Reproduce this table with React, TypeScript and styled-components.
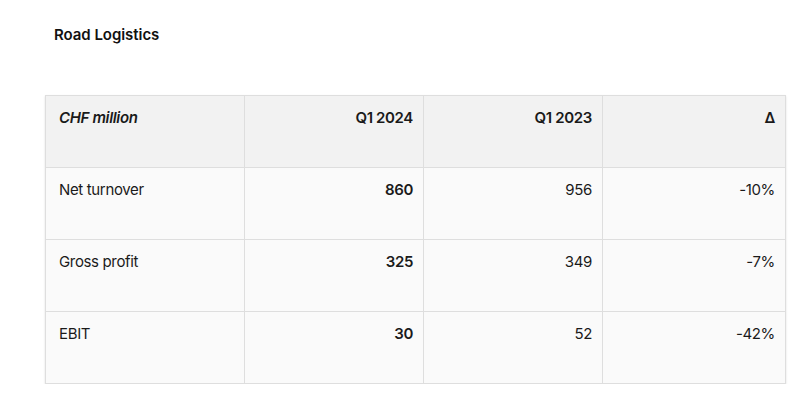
import React from "react";
import styled, { createGlobalStyle } from "styled-components";

const Global = createGlobalStyle`
  html, body { margin: 0; padding: 0; background: #ffffff; }
  body { font-family: Inter, "Noto Sans", "Liberation Sans", sans-serif; color: #1a1a1a; }
`;

const Page = styled.main`
  padding: 24px 26px 0 45px;
`;

const Title = styled.h3`
  margin: 0 0 49px 9px;
  font-size: 15px;
  line-height: 22px;
  font-weight: 600;
  letter-spacing: -0.05px;
  color: #111;
`;

const Table = styled.table`
  width: 740px;
  border-collapse: collapse;
  table-layout: fixed;
  border: 1px solid #cfcfcf;
  box-shadow: 0 1px 2px rgba(0, 0, 0, 0.12);
`;

const Row = styled.tr<{ $head?: boolean }>`
  background: ${(p) => (p.$head ? "#f2f2f2" : "#fafafa")};
`;

const Cell = styled.td<{ $align?: "left" | "right"; $bold?: boolean; $italic?: boolean }>`
  height: 72px;
  box-sizing: border-box;
  padding: 12px 10px 0 13px;
  vertical-align: top;
  text-align: ${(p) => p.$align ?? "right"};
  border: 1px solid #dedede;
  font-size: 15px;
  line-height: 20px;
  letter-spacing: -0.35px;
  font-weight: ${(p) => (p.$bold ? 600 : 400)};
  font-style: ${(p) => (p.$italic ? "italic" : "normal")};
  color: #1a1a1a;
`;

const rows = [
  { label: "Net turnover", a: "860", b: "956", d: "-10%" },
  { label: "Gross profit", a: "325", b: "349", d: "-7%" },
  { label: "EBIT", a: "30", b: "52", d: "-42%" },
];

export default function App() {
  return (
    <>
      <Global />
      <Page>
        <Title>Road Logistics</Title>
        <Table>
          <colgroup>
            <col style={{ width: 199 }} />
            <col style={{ width: 179 }} />
            <col style={{ width: 179 }} />
            <col style={{ width: 183 }} />
          </colgroup>
          <thead>
            <Row $head>
              <Cell as="th" $align="left" $bold $italic>CHF million</Cell>
              <Cell as="th" $bold>Q1 2024</Cell>
              <Cell as="th" $bold>Q1 2023</Cell>
              <Cell as="th" $bold>Δ</Cell>
            </Row>
          </thead>
          <tbody>
            {rows.map((r) => (
              <Row key={r.label}>
                <Cell $align="left">{r.label}</Cell>
                <Cell $bold>{r.a}</Cell>
                <Cell>{r.b}</Cell>
                <Cell>{r.d}</Cell>
              </Row>
            ))}
          </tbody>
        </Table>
      </Page>
    </>
  );
}
